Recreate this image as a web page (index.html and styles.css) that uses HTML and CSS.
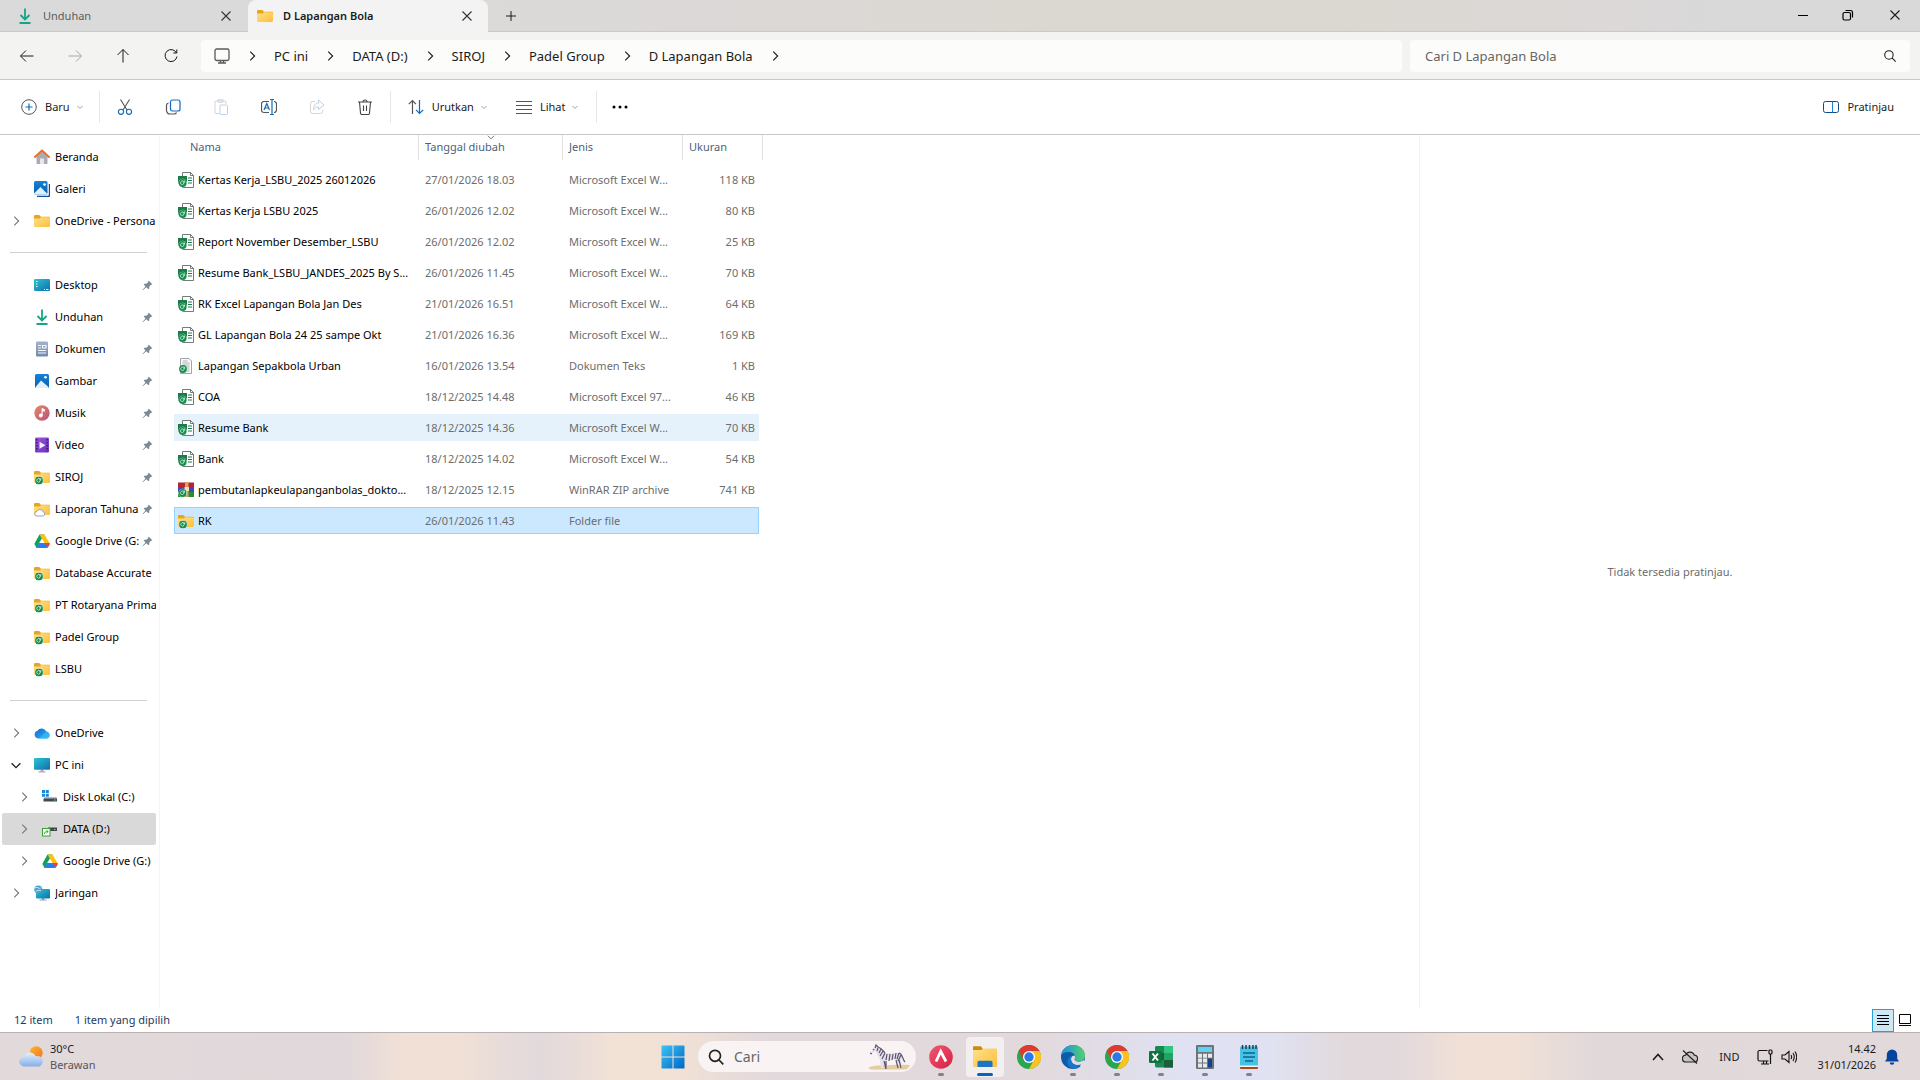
FILE: index.html
```html
<!DOCTYPE html>
<html lang="id">
    <head>
        <meta charset="utf-8">
        <title>D Lapangan Bola</title>
        <link rel="stylesheet" href="styles.css">
    </head>
    <body>
        <!--Icons-->
        <svg class="sprite" aria-hidden="true">
            <defs>
                <linearGradient id="gFolder" x1="0" y1="0" x2="1" y2="1"><stop offset="0" stop-color="#ffe08a"/><stop offset="1" stop-color="#fcbf3b"/></linearGradient>
                <linearGradient id="gTeal" x1="0" y1="0" x2="1" y2="1"><stop offset="0" stop-color="#2cc3d0"/><stop offset="1" stop-color="#0f6fae"/></linearGradient>
                <linearGradient id="gPic" x1="0" y1="0" x2="0" y2="1"><stop offset="0" stop-color="#1583d8"/><stop offset="1" stop-color="#0b5cad"/></linearGradient>
                <linearGradient id="gDoc" x1="0" y1="0" x2="0" y2="1"><stop offset="0" stop-color="#a3b3c9"/><stop offset="1" stop-color="#7389a8"/></linearGradient>
                <linearGradient id="gMusic" x1="0" y1="0" x2="1" y2="1"><stop offset="0" stop-color="#e58a62"/><stop offset="1" stop-color="#b9507f"/></linearGradient>
                <linearGradient id="gVideo" x1="0" y1="0" x2="1" y2="1"><stop offset="0" stop-color="#9c52dd"/><stop offset="1" stop-color="#6a35b8"/></linearGradient>
                <linearGradient id="gCloud" x1="0" y1="0" x2="1" y2="1"><stop offset="0" stop-color="#1668d6"/><stop offset="1" stop-color="#2cb4f5"/></linearGradient>
                <linearGradient id="gWin" x1="0" y1="0" x2="1" y2="1"><stop offset="0" stop-color="#3cc3f5"/><stop offset="1" stop-color="#0067c6"/></linearGradient>
                <linearGradient id="gWeather" x1="0" y1="0" x2="0" y2="1"><stop offset="0" stop-color="#e4effc"/><stop offset="1" stop-color="#86b0ea"/></linearGradient>
                <linearGradient id="gSun" x1="0" y1="0" x2="1" y2="1"><stop offset="0" stop-color="#ffb52e"/><stop offset="1" stop-color="#ef7421"/></linearGradient>
                <linearGradient id="gEdge" x1="0" y1="0" x2="1" y2="0"><stop offset="0" stop-color="#1d8fe0"/><stop offset="1" stop-color="#52d36b"/></linearGradient>
                <linearGradient id="gRed" x1="0" y1="0" x2="1" y2="1"><stop offset="0" stop-color="#f0596f"/><stop offset="1" stop-color="#d81f45"/></linearGradient>
            </defs>
            <symbol id="chev-right" viewBox="0 0 16 16"><path d="M6 3l5 5-5 5" fill="none" stroke="currentColor" stroke-width="1.3"/></symbol>
            <symbol id="chev-down" viewBox="0 0 16 16"><path d="M3 6l5 5 5-5" fill="none" stroke="currentColor" stroke-width="1.6"/></symbol>
            <symbol id="chev-up" viewBox="0 0 16 16"><path d="M3 11l5-5.500 5 5.500" fill="none" stroke="currentColor" stroke-width="1.6"/></symbol>
            <symbol id="close" viewBox="0 0 16 16"><path d="M3.500 3.500l9 9M12.500 3.500l-9 9" fill="none" stroke="currentColor" stroke-width="1.1"/></symbol>
            <symbol id="search" viewBox="0 0 16 16"><g fill="none" stroke="currentColor" stroke-width="1.200"><circle cx="6.800" cy="6.800" r="4.800"/><path d="M10.200 10.200l4.300 4.300"/></g></symbol>
            <symbol id="ok" viewBox="0 0 8 8"><circle cx="4" cy="4" r="3.900" fill="#178f50"/><path d="M2.200 5.200A2 2 0 0 1 5.500 2.800M5.800 1.600v1.600H4.200M2.500 4.800l1.200 1.200 2-2.500" fill="none" stroke="#d5f3e2" stroke-width=".8"/></symbol>
            <symbol id="folder" viewBox="0 0 16 16"><path d="M0 3.200c0-.7.500-1.200 1.200-1.200h4l1.800 1.800h7.800c.7 0 1.200.5 1.200 1.200V8H0z" fill="#e9a41c"/><path d="M0 5.500h5.500L7 4.200h7.800c.7 0 1.200.5 1.200 1.200v7.400c0 .7-.5 1.200-1.200 1.200H1.200C.5 14 0 13.500 0 12.800z" fill="url(#gFolder)"/></symbol>
            <symbol id="folder-ok" viewBox="0 0 16 16"><use href="#folder"/><circle cx="5" cy="11.500" r="4.300" fill="#e9f5ee"/><use href="#ok" x="1" y="7.500" width="8" height="8"/></symbol>
            <symbol id="folder-cloud" viewBox="0 0 16 16"><use href="#folder"/><path d="M3 15a2.300 2.300 0 0 1 0-4.600 3.200 3.200 0 0 1 6 .3A2.200 2.200 0 0 1 9 15z" fill="#fff" stroke="#8a9ac0" stroke-width=".9"/></symbol>
            <symbol id="home" viewBox="0 0 16 16"><path d="M2.500 7L8 2.500 13.500 7v7.200c0 .4-.3.800-.8.800H10v-5H6v5H3.300c-.5 0-.8-.4-.8-.8z" fill="#a9adb3"/><path d="M6 9.500h4V15H6z" fill="#e6e7e9"/><path d="M1 8l7-6.500L15 8" fill="none" stroke="#e8702a" stroke-width="2" stroke-linecap="round" stroke-linejoin="round"/></symbol>
            <symbol id="gallery" viewBox="0 0 16 16"><path d="M3 15.500h11c.9 0 1.500-.6 1.500-1.500V3" fill="none" stroke="#0d4f95" stroke-width="1.400"/><rect width="13.500" height="13.500" rx="1.500" fill="url(#gPic)"/><path d="M0 12.500L6.500 6l7 7c-.3.300-.7.500-1 .5h-11C.6 13.500 0 13.300 0 12.500z" fill="#dff1fc"/><circle cx="10.500" cy="3.500" r="1.300" fill="#fff"/></symbol>
            <symbol id="desktop" viewBox="0 0 16 16"><rect y="2" width="16" height="12" rx="1.300" fill="url(#gTeal)"/><path d="M2 4.500h1.500M2 7h1.500M2 9.500h1.500M10 12.500h1M12 12.500h2.500" stroke="#e8fbff" stroke-width="1.200"/></symbol>
            <symbol id="download" viewBox="0 0 16 16"><path d="M8 .5v11M3.500 7L8 11.500 12.500 7M2.500 15h11" fill="none" stroke="#16a589" stroke-width="1.800"/></symbol>
            <symbol id="document" viewBox="0 0 16 16"><rect x="2" y=".5" width="12" height="15" rx="1.200" fill="url(#gDoc)"/><path d="M4 4.500h3M4 7h3M8.500 4.500h3.500v2.500H8.500zM4 9.500h8M4 12h8" stroke="#f4f8fc" stroke-width="1.200" fill="none"/></symbol>
            <symbol id="picture" viewBox="0 0 16 16"><rect x="1" y="1" width="14" height="14" rx="1.500" fill="url(#gPic)"/><path d="M1.500 14L7 7.500l7.500 6.500c-.2.600-.6 1-1 1h-11c-.5 0-.9-.5-1-1z" fill="#dff1fc"/><circle cx="11.500" cy="4.300" r="1.300" fill="#fff"/></symbol>
            <symbol id="music" viewBox="0 0 16 16"><circle cx="8" cy="8" r="7.700" fill="url(#gMusic)"/><circle cx="6.800" cy="10.500" r="1.900" fill="#fff"/><path d="M8 10.500V3.500l2.500 1v1.800L8.700 5.600" fill="#fff" stroke="#fff" stroke-width=".9"/></symbol>
            <symbol id="video" viewBox="0 0 16 16"><rect x="1" y=".5" width="14" height="15" rx="1.200" fill="url(#gVideo)"/><path d="M2.800 2v12.500M13.200 2v12.500" stroke="#3a1975" stroke-width="1.500" stroke-dasharray="1.500 1.500"/><path d="M5.500 4.800l6 3.400-6 3.500z" fill="#f3e9fd"/></symbol>
            <symbol id="gdrive" viewBox="0 0 16 16"><path d="M5.500 1.500h5L5 11 2.500 15 .8 11.800c-.4-.8-.3-1.300 0-1.900z" fill="#14a05a"/><path d="M5.500 1.500h5l4.900 8.500h-5z" fill="#fbc013"/><path d="M5.200 10h5.200l-2.600-4.300z" fill="#fff"/><path d="M5.200 10h10.200c.3.600.2 1.200 0 1.700l-1.300 2.300c-.3.600-.8 1-1.600 1H3.500c-.6 0-1-.2-1.300-.6z" fill="#2b7de9"/><path d="M10.400 10h5c.3.600.2 1.200 0 1.700l-1.700 2.800z" fill="#e8443a"/></symbol>
            <symbol id="onedrive" viewBox="0 0 16 16"><path d="M4 13.500a4 4 0 0 1-.5-7.800 5 5 0 0 1 8.800.8 3.600 3.600 0 0 1 .5 7z" fill="url(#gCloud)"/><path d="M5 13.500L12 6.500c2 .2 4 1.700 4 3.700 0 2-1.500 3.300-3.200 3.300z" fill="#35bdf8" opacity=".7"/></symbol>
            <symbol id="pc" viewBox="0 0 16 16"><path d="M6.500 12.500h3v2h-3zM4.500 14.300h7v1.200h-7z" fill="#b5a3c9"/><rect y="1" width="16" height="11.800" rx="1" fill="url(#gTeal)"/></symbol>
            <symbol id="disk-c" viewBox="0 0 16 16"><path d="M0 1h3v3H0zM3.800 1h3v3h-3zM0 4.800h3v3H0zM3.800 4.800h3v3h-3z" fill="#1a86d9"/><path d="M2.500 8.200h12l.5 1.500H2z" fill="#a0a4a8"/><rect x="1.500" y="9.500" width="13.500" height="3" fill="#43484c"/><path d="M12 11h1.500" stroke="#61e06b"/></symbol>
            <symbol id="disk-d" viewBox="0 0 16 16"><path d="M6 6.500h9v3.500H8.500z" fill="#43484c"/><path d="M6 6h9v1H6z" fill="#8b8f93"/><path d="M12 8.500h1.500" stroke="#61e06b"/><rect x=".5" y="7.500" width="7.500" height="7.500" fill="#fff" stroke="#35a42f"/><path d="M2.500 13c0-2 1-2.500 3.500-2.500M4.500 9.200L6.200 10.600 4.500 12" fill="none" stroke="#35a42f"/></symbol>
            <symbol id="network" viewBox="0 0 16 16"><path d="M8 13h2v2H8zM5.500 14.500h7v1h-7z" fill="#8c9bb8"/><rect x="2" y="4" width="14" height="9.500" rx="1" fill="url(#gTeal)"/><circle cx="4.300" cy="4.500" r="4" fill="#4aa0d0"/><path d="M1 3c3-2 4 2 6-.5M2 7c1-3 3-1 5-1.500" stroke="#d8f0e8" fill="none"/></symbol>
            <symbol id="pin" viewBox="0 0 12 12"><path d="M7.500.8l3.800 3.700-.9.800-.6-.2-1.900 2v2.200l-.9.900-2.300-2.300L1 11.300l-.5-.5 3.300-3.700L1.800 5l.8-.8h2.200l2-2-.2-.6z" fill="#7d8a94"/></symbol>
            <symbol id="xls" viewBox="0 0 16 16"><path d="M4.500.5h8l3 3v12h-11z" fill="#fff" stroke="#4e5d57" stroke-width=".8"/><path d="M12.500.5v3h3" fill="none" stroke="#4e5d57" stroke-width=".8"/><path d="M10 6h4M10 8.500h4M10 11h4" stroke="#1c7c47" stroke-width="1.200"/><rect y="4" width="9" height="8" fill="#1c7c47"/><circle cx="4.700" cy="11" r="4.300" fill="#d3eedf"/><use href="#ok" x=".7" y="7" width="8" height="8"/></symbol>
            <symbol id="txt" viewBox="0 0 16 16"><path d="M2.500.5h8.500l2.500 2.500v12.500h-11z" fill="#fafafa" stroke="#8c8f90" stroke-width=".8"/><path d="M4.500 3h5M4.500 5h7M4.500 7h7M8 9h3.500M9 11h2.500M9 13h2.500" stroke="#9c9fa1" stroke-width=".8"/><use href="#ok" x="1" y="7" width="8" height="8"/></symbol>
            <symbol id="rar" viewBox="0 0 16 16"><rect width="16" height="5.500" y=".5" fill="#b32438"/><rect width="16" height="4.500" y="5.500" fill="#3b4bb0"/><rect width="16" height="5" y="10" fill="#2d8a45"/><path d="M7 .5h3.500v14.500H7z" fill="#e0a24b"/><path d="M6.500 5h4.500v4H6.500z" fill="#f3e2b4"/><circle cx="4.700" cy="11" r="4.300" fill="#e9f5ee"/><use href="#ok" x=".7" y="7" width="8" height="8"/></symbol>
            <symbol id="chrome" viewBox="0 0 24 24"><circle cx="12" cy="12" r="12" fill="#2da44e"/><path d="M1.600 6A12 12 0 0 1 22.400 6L12 6.600 7 14.800z" fill="#dd3b2f"/><path d="M22.400 6A12 12 0 0 1 12 24l5-9 .2-6L12 6z" fill="#fcc31e"/><circle cx="12" cy="12" r="6" fill="#fff"/><circle cx="12" cy="12" r="4.700" fill="#2b78e8"/></symbol>
        </svg>

        <!--Title bar with tabs-->
        <header class="titlebar">
            <div class="tab">
                <svg class="icon"><use href="#download"/></svg>
                <span class="tab-name">Unduhan</span>
                <button class="plain" aria-label="Tutup tab"><svg class="icon"><use href="#close"/></svg></button>
            </div>
            <div class="tab active">
                <svg class="icon"><use href="#folder"/></svg>
                <span class="tab-name">D Lapangan Bola</span>
                <button class="plain" aria-label="Tutup tab"><svg class="icon"><use href="#close"/></svg></button>
            </div>
            <button class="plain new-tab" aria-label="Tab baru"><svg class="icon" viewBox="0 0 16 16"><path d="M8 3v10M3 8h10" stroke="currentColor"/></svg></button>
            <div class="window-buttons">
                <button class="plain" aria-label="Minimalkan"><svg class="icon" viewBox="0 0 16 16"><path d="M3 8.500h10" stroke="#000"/></svg></button>
                <button class="plain" aria-label="Pulihkan"><svg class="icon" viewBox="0 0 16 16"><g fill="none" stroke="#000" stroke-width="1.200"><rect x="3" y="5.500" width="7.500" height="7.500" rx="1.500"/><path d="M5.500 3.500h5a2 2 0 0 1 2 2v5"/></g></svg></button>
                <button class="plain" aria-label="Tutup"><svg class="icon"><use href="#close"/></svg></button>
            </div>
        </header>

        <!--Address bar-->
        <nav class="addressbar">
            <button class="plain nav-button" aria-label="Kembali"><svg class="icon" viewBox="0 0 16 16"><path d="M14.500 8h-13M7 2.500L1.500 8 7 13.500" fill="none" stroke="currentColor"/></svg></button>
            <button class="plain nav-button off" aria-label="Maju"><svg class="icon" viewBox="0 0 16 16"><path d="M1.500 8h13M9 2.500L14.500 8 9 13.500" fill="none" stroke="currentColor"/></svg></button>
            <button class="plain nav-button" aria-label="Naik"><svg class="icon" viewBox="0 0 16 16"><path d="M8 14.500v-13M2.500 7L8 1.500 13.500 7" fill="none" stroke="currentColor"/></svg></button>
            <button class="plain nav-button" aria-label="Refresh"><svg class="icon" viewBox="0 0 16 16"><path d="M13.500 5A6 6 0 1 0 14 8.500M13.800 1.500V5h-3.500" fill="none" stroke="currentColor"/></svg></button>
            <div class="path">
                <svg class="icon" viewBox="0 0 16 16"><g fill="none" stroke="#5a5a5a" stroke-width="1.300"><rect x="1" y="1" width="14" height="11.500" rx="1.800"/><path d="M4 15h8M6.500 12.500v2M9.500 12.500v2"/></g></svg>
                <svg class="sep-icon"><use href="#chev-right"/></svg>
                <a href="#">PC ini</a>
                <svg class="sep-icon"><use href="#chev-right"/></svg>
                <a href="#">DATA (D:)</a>
                <svg class="sep-icon"><use href="#chev-right"/></svg>
                <a href="#">SIROJ</a>
                <svg class="sep-icon"><use href="#chev-right"/></svg>
                <a href="#">Padel Group</a>
                <svg class="sep-icon"><use href="#chev-right"/></svg>
                <a href="#">D Lapangan Bola</a>
                <svg class="sep-icon"><use href="#chev-right"/></svg>
            </div>
            <div class="find">
                <input type="text" aria-label="Cari" placeholder="Cari D Lapangan Bola">
                <svg class="find-icon"><use href="#search"/></svg>
            </div>
        </nav>

        <!--Toolbar-->
        <div class="toolbar">
            <button class="plain tool new"><svg class="icon" viewBox="0 0 16 16"><circle cx="8" cy="8" r="7.300" fill="none" stroke="#555"/><path d="M8 4.500v7M4.500 8h7" stroke="#0f6cbd" stroke-width="1.200"/></svg>Baru<svg class="caret"><use href="#chev-down"/></svg></button>
            <div class="tool-group">
                <button class="plain tool" aria-label="Potong"><svg class="icon" viewBox="0 0 16 16"><g fill="none" stroke-width="1.100"><path d="M3.500.5l6.500 10.500M12.500.5L6 11" stroke="#555"/><g stroke="#0f6cbd"><circle cx="4" cy="12.800" r="2.600"/><circle cx="12" cy="12.800" r="2.600"/></g></g></svg></button>
                <button class="plain tool" aria-label="Salin"><svg class="icon" viewBox="0 0 16 16"><g fill="none" stroke-width="1.200"><rect x="5.500" y="1" width="9.500" height="11" rx="2" stroke="#0f6cbd"/><path d="M3.500 4C2 4.300 1.500 5 1.500 6.500v5A3.500 3.500 0 0 0 5 15h4c1.500 0 2.200-.5 2.500-1.500" stroke="#555"/></g></svg></button>
                <button class="plain tool" aria-label="Tempel" disabled><svg class="icon" viewBox="0 0 16 16"><g fill="none"><path d="M6.500 14.500H3a1 1 0 0 1-1-1V3a1 1 0 0 1 1-1h9a1 1 0 0 1 1 1v2M5 .7h5v2.500H5z" stroke="#c9c9c9"/><rect x="7" y="6" width="7.500" height="9.500" rx="1" stroke="#a9c9e6"/></g></svg></button>
                <button class="plain tool" aria-label="Ganti nama"><svg class="icon" viewBox="0 0 16 16"><g fill="none" stroke="#0f6cbd" stroke-width="1.200"><path d="M8 2.500H3a2.500 2.500 0 0 0-2.500 2.500v6A2.500 2.500 0 0 0 3 13.500h5M13 2.500a2.500 2.500 0 0 1 2.500 2.500v6a2.500 2.500 0 0 1-2.500 2.500" stroke="#555"/><path d="M3 11l2.800-6.500L8.500 11M4 9h3.700M11 .5v15M9 .5h4M9 15.500h4"/></g></svg></button>
                <button class="plain tool" aria-label="Bagikan" disabled><svg class="icon" viewBox="0 0 16 16"><g fill="none"><path d="M6 2.500H3.500a2 2 0 0 0-2 2v8a2 2 0 0 0 2 2h8a2 2 0 0 0 2-2V11" stroke="#c9c9c9"/><path d="M9.500 1l5.500 5-5.500 4.500V8C7 8 5.500 9 4.500 11 4.500 7 6.500 4 9.500 4z" stroke="#a9c9e6"/></g></svg></button>
                <button class="plain tool" aria-label="Hapus"><svg class="icon" viewBox="0 0 16 16"><path d="M1 3h14M6 3a2 2 0 0 1 4 0M2.500 3l1 11a1.500 1.500 0 0 0 1.500 1.500h6a1.500 1.500 0 0 0 1.500-1.500l1-11M6.500 6.500v5.500M9.500 6.500v5.500" fill="none" stroke="#444" stroke-width="1.100"/></svg></button>
            </div>
            <div class="tool-group">
                <button class="plain tool"><svg class="icon" viewBox="0 0 16 16"><g fill="none" stroke-width="1.200"><path d="M4.500 15V1.500M.8 5.200l3.700-3.700 3.500 3.700" stroke="#555"/><path d="M11.500 1v13.500M8 10.800l3.500 3.700 3.700-3.700" stroke="#0f6cbd"/></g></svg>Urutkan<svg class="caret"><use href="#chev-down"/></svg></button>
                <button class="plain tool"><svg class="icon" viewBox="0 0 16 16"><path d="M0 2.500h16M0 6.500h16M0 10.500h16M0 14.500h16" stroke="#555"/></svg>Lihat<svg class="caret"><use href="#chev-down"/></svg></button>
            </div>
            <button class="plain tool more" aria-label="Lainnya"><svg class="icon" viewBox="0 0 16 16"><circle cx="2" cy="8" r="1.500"/><circle cx="8" cy="8" r="1.500"/><circle cx="14" cy="8" r="1.500"/></svg></button>
            <button class="plain tool preview-toggle"><svg class="icon" viewBox="0 0 16 16"><g fill="none"><rect x=".5" y="2.500" width="15" height="11" rx="2" stroke="#0f4a80"/><path d="M9.500 2.500v11" stroke="#1583d8"/></g></svg>Pratinjau</button>
        </div>

        <main class="content">
            <!--Navigation pane-->
            <aside class="sidebar">
                <ul>
                    <li><svg class="icon"><use href="#home"/></svg><span>Beranda</span></li>
                    <li><svg class="icon"><use href="#gallery"/></svg><span>Galeri</span></li>
                    <li class="closed"><svg class="arrow"><use href="#chev-right"/></svg><svg class="icon"><use href="#folder"/></svg><span>OneDrive - Persona</span></li>
                </ul>
                <hr>
                <ul>
                    <li><svg class="icon"><use href="#desktop"/></svg><span>Desktop</span><svg class="pin"><use href="#pin"/></svg></li>
                    <li><svg class="icon"><use href="#download"/></svg><span>Unduhan</span><svg class="pin"><use href="#pin"/></svg></li>
                    <li><svg class="icon"><use href="#document"/></svg><span>Dokumen</span><svg class="pin"><use href="#pin"/></svg></li>
                    <li><svg class="icon"><use href="#picture"/></svg><span>Gambar</span><svg class="pin"><use href="#pin"/></svg></li>
                    <li><svg class="icon"><use href="#music"/></svg><span>Musik</span><svg class="pin"><use href="#pin"/></svg></li>
                    <li><svg class="icon"><use href="#video"/></svg><span>Video</span><svg class="pin"><use href="#pin"/></svg></li>
                    <li><svg class="icon"><use href="#folder-ok"/></svg><span>SIROJ</span><svg class="pin"><use href="#pin"/></svg></li>
                    <li><svg class="icon"><use href="#folder-cloud"/></svg><span>Laporan Tahuna</span><svg class="pin"><use href="#pin"/></svg></li>
                    <li><svg class="icon"><use href="#gdrive"/></svg><span>Google Drive (G:</span><svg class="pin"><use href="#pin"/></svg></li>
                    <li><svg class="icon"><use href="#folder-ok"/></svg><span>Database Accurate</span></li>
                    <li><svg class="icon"><use href="#folder-ok"/></svg><span>PT Rotaryana Prima</span></li>
                    <li><svg class="icon"><use href="#folder-ok"/></svg><span>Padel Group</span></li>
                    <li><svg class="icon"><use href="#folder-ok"/></svg><span>LSBU</span></li>
                </ul>
                <hr>
                <ul>
                    <li class="closed"><svg class="arrow"><use href="#chev-right"/></svg><svg class="icon"><use href="#onedrive"/></svg><span>OneDrive</span></li>
                    <li class="open"><svg class="arrow"><use href="#chev-down"/></svg><svg class="icon"><use href="#pc"/></svg><span>PC ini</span></li>
                    <li class="closed child"><svg class="arrow"><use href="#chev-right"/></svg><svg class="icon"><use href="#disk-c"/></svg><span>Disk Lokal (C:)</span></li>
                    <li class="closed child current"><svg class="arrow"><use href="#chev-right"/></svg><svg class="icon"><use href="#disk-d"/></svg><span>DATA (D:)</span></li>
                    <li class="closed child"><svg class="arrow"><use href="#chev-right"/></svg><svg class="icon"><use href="#gdrive"/></svg><span>Google Drive (G:)</span></li>
                    <li class="closed"><svg class="arrow"><use href="#chev-right"/></svg><svg class="icon"><use href="#network"/></svg><span>Jaringan</span></li>
                </ul>
            </aside>

            <!--File list-->
            <section class="files">
                <table>
                    <thead>
                        <tr>
                            <th class="name">Nama</th>
                            <th class="date">Tanggal diubah<svg class="sort"><use href="#chev-down"/></svg></th>
                            <th class="type">Jenis</th>
                            <th class="size">Ukuran</th>
                        </tr>
                    </thead>
                    <tbody>
                        <tr><td><svg class="icon"><use href="#xls"/></svg>Kertas Kerja_LSBU_2025 26012026</td><td>27/01/2026 18.03</td><td>Microsoft Excel W...</td><td>118 KB</td></tr>
                        <tr><td><svg class="icon"><use href="#xls"/></svg>Kertas Kerja LSBU 2025</td><td>26/01/2026 12.02</td><td>Microsoft Excel W...</td><td>80 KB</td></tr>
                        <tr><td><svg class="icon"><use href="#xls"/></svg>Report November Desember_LSBU</td><td>26/01/2026 12.02</td><td>Microsoft Excel W...</td><td>25 KB</td></tr>
                        <tr><td><svg class="icon"><use href="#xls"/></svg>Resume Bank_LSBU_JANDES_2025 By S...</td><td>26/01/2026 11.45</td><td>Microsoft Excel W...</td><td>70 KB</td></tr>
                        <tr><td><svg class="icon"><use href="#xls"/></svg>RK Excel Lapangan Bola Jan Des</td><td>21/01/2026 16.51</td><td>Microsoft Excel W...</td><td>64 KB</td></tr>
                        <tr><td><svg class="icon"><use href="#xls"/></svg>GL Lapangan Bola 24 25 sampe Okt</td><td>21/01/2026 16.36</td><td>Microsoft Excel W...</td><td>169 KB</td></tr>
                        <tr><td><svg class="icon"><use href="#txt"/></svg>Lapangan Sepakbola Urban</td><td>16/01/2026 13.54</td><td>Dokumen Teks</td><td>1 KB</td></tr>
                        <tr><td><svg class="icon"><use href="#xls"/></svg>COA</td><td>18/12/2025 14.48</td><td>Microsoft Excel 97...</td><td>46 KB</td></tr>
                        <tr class="hovered"><td><svg class="icon"><use href="#xls"/></svg>Resume Bank</td><td>18/12/2025 14.36</td><td>Microsoft Excel W...</td><td>70 KB</td></tr>
                        <tr><td><svg class="icon"><use href="#xls"/></svg>Bank</td><td>18/12/2025 14.02</td><td>Microsoft Excel W...</td><td>54 KB</td></tr>
                        <tr><td><svg class="icon"><use href="#rar"/></svg>pembutanlapkeulapanganbolas_dokto...</td><td>18/12/2025 12.15</td><td>WinRAR ZIP archive</td><td>741 KB</td></tr>
                        <tr class="selected"><td><svg class="icon"><use href="#folder-ok"/></svg>RK</td><td>26/01/2026 11.43</td><td>Folder file</td><td></td></tr>
                    </tbody>
                </table>
            </section>

            <section class="preview">Tidak tersedia pratinjau.</section>
        </main>

        <footer class="status">
            <span>12 item</span>
            <span>1 item yang dipilih</span>
            <div class="views">
                <button class="plain view on" aria-label="Detail"><svg class="icon" viewBox="0 0 16 16"><path d="M2 3.500h12M2 6.500h12M2 9.500h12M2 12.500h12" stroke="#000"/></svg></button>
                <button class="plain view" aria-label="Ikon besar"><svg class="icon" viewBox="0 0 16 16"><path d="M2.500 2.500h11v9h-11zM2 13.500h12" fill="none" stroke="#000"/></svg></button>
            </div>
        </footer>

        <!--Taskbar-->
        <div class="taskbar">
            <div class="weather">
                <svg class="weather-icon" viewBox="0 0 24 24"><circle cx="16.500" cy="8.500" r="6.300" fill="url(#gSun)"/><path d="M5 21.500a4.600 4.600 0 0 1-.3-9.200 6 6 0 0 1 11.200-.5A5 5 0 0 1 19.500 21.500z" fill="url(#gWeather)"/></svg>
                <div>30°C<br><span>Berawan</span></div>
            </div>
            <div class="apps">
                <button class="plain app start" aria-label="Mulai"><svg class="app-icon" viewBox="0 0 24 24"><path d="M1 .5h10.500v11H.5V1zM12.500.5H23l.5.5v10.500h-11zM.5 12.500h11v11H1l-.5-.5zM12.500 12.500h11V23l-.5.500H12.500z" fill="url(#gWin)"/></svg></button>
                <div class="task-search">
                    <svg class="icon" viewBox="0 0 16 16"><g fill="none" stroke="#222" stroke-width="1.700"><circle cx="7" cy="6.800" r="5.500"/><path d="M11 11l4.300 4.300"/></g></svg>
                    <input type="text" aria-label="Cari di taskbar" placeholder="Cari">
                    <svg class="zebra" viewBox="0 0 44 26">
                        <path d="M0 24c6-3 14-2.500 22-3 8-.4 14-.5 20 0-1 2-2.500 3.500-4 4.500H3z" fill="#e5cba0"/>
                        <path d="M2 9l5-5 1-3 2 2c3 .5 5 4 7 6 5 1 10-1 14 0 2 1 3 3 3 5l-1 3 1 7h-2l-2-7-3-2c-3 1-6 1-8 1v8h-2l-1-8-1 8h-2l-1-9c-2-2-3-5-4-8l-4 2-2 .5z" fill="#e4dfea"/>
                        <path d="M7 4l1-3 2 2c4 1 6 5 7 6M2 9l2 1M10 4l-1 3M13 5l-2 4M15 7l-3 5M17 9l-3 6M19 10l-1 6M22 10l-1 7M25 10l-1 6M28 9l-1 6M31 9l-2 6M33 11l-3 6M31 9c4 1 3 6 6 9M16 17l2 8M18 17v8M31 16l2 8M28 16l2 8M5 5l1 1" fill="none" stroke="#5a5570" stroke-width="1.200"/>
                    </svg>
                </div>
                <button class="plain app running" aria-label="Accurate"><svg class="app-icon" viewBox="0 0 24 24"><circle cx="12" cy="12" r="11.800" fill="url(#gRed)"/><path d="M7 16.500l4.700-10 5.300 10" fill="none" stroke="#fff" stroke-width="2.800"/></svg></button>
                <button class="plain app focused" aria-label="File Explorer"><svg class="app-icon" viewBox="0 0 24 24"><path d="M0 2.500c0-.8.500-1.200 1.200-1.200h6.600L10 4v5H0z" fill="#c98d0c"/><path d="M0 5h8.500L10 3.500h12.800c.7 0 1.200.5 1.200 1.200v16.100c0 .7-.5 1.200-1.200 1.200H1.200C.5 22 0 21.500 0 20.800z" fill="url(#gFolder)"/><path d="M4.500 22v-4.500c0-1 .7-1.700 1.700-1.700h11.600c1 0 1.700.7 1.700 1.700V22z" fill="#1b74c5"/></svg></button>
                <button class="plain app" aria-label="Chrome"><svg class="app-icon"><use href="#chrome"/></svg></button>
                <button class="plain app running" aria-label="Edge"><svg class="app-icon" viewBox="0 0 24 24"><circle cx="12" cy="12" r="12" fill="#0e5ba8"/><path d="M.2 10C1.500 4 6 0 12 0c7 0 12 5 12 10.500 0 4-3 6-6.500 6-2.500 0-4-1-4-2 0-.8.800-1.200.8-2.500C14.300 9 11 7 7.500 7 3.500 7 1 8.500.2 10z" fill="url(#gEdge)"/><path d="M14.300 12c0 1-.8 1.500-.8 2.500 0 1.200 1.800 2.300 4 2.300 2 0 4-.6 5.300-1.800L24 18l-3.500 3.500c-1.500-1-3-1.500-5-1.500-3.500-.5-5.500-3-5.500-6 0-2 1.500-3.500 3.300-3.500z" fill="#e2dce6"/><path d="M10 14c0 3 2 5.500 5.500 6 2 .2 3.500-.2 4.700-1a12 12 0 0 1-8.200 5c-3-1-5.500-4-5.500-7.500 0-3 2-5.500 5-6-.9.900-1.500 2-1.500 3.500z" fill="#1876cc"/></svg></button>
                <button class="plain app running" aria-label="Chrome"><svg class="app-icon"><use href="#chrome"/></svg></button>
                <button class="plain app running" aria-label="Excel"><svg class="app-icon" viewBox="0 0 24 24"><path d="M6 2.500C6 1.700 6.700 1 7.500 1H24v21.500H7.500c-.8 0-1.500-.7-1.500-1.500z" fill="#1a8a50"/><path d="M15 1h9v7h-9z" fill="#33c481"/><path d="M6 8h9v7H6zM15 15h9v7.500h-9z" fill="#17603a"/><path d="M15 8h9v7h-9z" fill="#21a366"/><rect y="6" width="12.500" height="12" rx="1.200" fill="#0f7240"/><path d="M3.500 8.500l5.500 7M9 8.500l-5.500 7" stroke="#fff" stroke-width="1.900"/></svg></button>
                <button class="plain app running" aria-label="Kalkulator"><svg class="app-icon" viewBox="0 0 24 24"><rect x="3" width="18" height="24" rx="1.200" fill="#6d7379"/><rect x="5" y="2" width="14" height="5" fill="#5fd3f3"/><path d="M5 8.800h4v4H5zM10 8.800h4v4h-4zM15 8.800h4v4h-4zM5 13.600h4v4H5zM10 13.600h4v4h-4zM5 18.400h4v4H5zM10 18.400h4v4h-4z" fill="#e6e8ea"/><path d="M15 13.600h4v8.800h-4z" fill="#16418c"/></svg></button>
                <button class="plain app running" aria-label="Notepad"><svg class="app-icon" viewBox="0 0 24 24"><rect x="3" y="21" width="18" height="3" rx="1" fill="#a8481f"/><rect x="3" y="1.500" width="18" height="20.500" rx="1.200" fill="#46c3e2"/><path d="M3 20.500h18v1.500H3z" fill="#eef4f6"/><path d="M5.500 0v4M9 0v4M12.500 0v4M16 0v4M19 0v4" stroke="#1d3c58" stroke-width="1.500"/><path d="M6 8h12M6 12h12M8 16h8" stroke="#0c6397" stroke-width="1.600"/></svg></button>
            </div>
            <div class="tray">
                <svg class="icon overflow"><use href="#chev-up"/></svg>
                <svg class="icon" viewBox="0 0 16 16"><g fill="none" stroke="#222" stroke-width="1.200"><path d="M4 13a3.400 3.400 0 0 1-.3-6.800 4.500 4.500 0 0 1 8.600 0A3.400 3.400 0 0 1 12 13z" fill="#c9c3c5"/><path d="M1 1.500l14 13"/></g></svg>
                <span class="lang">IND</span>
                <svg class="icon" viewBox="0 0 16 16"><g fill="none" stroke="#111" stroke-width="1.200"><path d="M10.500 1.500h-8a1.500 1.500 0 0 0-1.500 1.500v7.500A1.500 1.500 0 0 0 2.500 12h9M4 15h8M6.500 12v3M9.500 12v3"/><rect x="12" y="1" width="3" height="4" rx="1"/><path d="M13.500 5v10"/></g></svg>
                <svg class="icon" viewBox="0 0 16 16"><g fill="none" stroke="#111" stroke-width="1.100"><path d="M1 6h3l4-3.500v11L4 10H1z"/><path d="M10 6q1.300 2 0 4M12 4q2.500 4 0 8M14 2.500q3.500 5.500 0 11"/></g></svg>
                <div class="clock">14.42<br>31/01/2026</div>
                <svg class="icon" viewBox="0 0 16 16"><path d="M8 .5a5.200 5.200 0 0 1 5.200 5.200v4L15 12.500H1l1.800-2.800v-4A5.200 5.200 0 0 1 8 .5zM5.700 13.500h4.600a2.300 2.300 0 0 1-4.600 0z" fill="#06439a"/></svg>
            </div>
        </div>
    </body>
</html>
```
FILE: styles.css
```css
* {
    box-sizing: border-box;
}
body {
    margin: 0px;
    height: 100vh;
    display: flex;
    flex-direction: column;
    overflow: hidden;
    background-color: white;
    color: #1b1b1b;
    font-family: "Segoe UI", "Noto Sans", "Open Sans", sans-serif;
    font-size: 11px;
    line-height: 16px;
}
.sprite {
    position: absolute;
    width: 0px;
    height: 0px;
}
.plain {
    display: flex;
    align-items: center;
    justify-content: center;
    padding: 0px;
    border: none;
    background: none;
    color: inherit;
    font: inherit;
}
.icon {
    flex: none;
    width: 16px;
    height: 16px;
}
input {
    border: none;
    outline: none;
    background: none;
    font: inherit;
    min-width: 0px;
    flex: 1;
    padding: 0px;
}
input::placeholder {
    color: #666;
    opacity: 1;
}

/* title bar */
.titlebar {
    flex: none;
    height: 32px;
    display: flex;
    background: linear-gradient(to right, #dadada 10%, #dcd8d8 35%, #dbd8d2 55%, #dbd8d2 70%, #dcd8d7 82%, #d9d9d9 90%);
    border-bottom: 1px solid #cbc9c8;
}
.tab {
    width: 248px;
    padding: 0px 14px 0px 17px;
    display: flex;
    align-items: center;
    gap: 10px;
    color: #5c5c5c;
}
.tab-name {
    flex: 1;
}
.tab .plain {
    color: #333;
}
.tab.active {
    width: 240px;
    margin-bottom: -1px;
    padding: 0px 13px 0px 9px;
    border-radius: 8px 8px 0px 0px;
    background-color: #f3f3f3;
    color: #1b1b1b;
    font-weight: 600;
}
.new-tab {
    width: 46px;
}
.window-buttons {
    display: flex;
    margin-left: auto;
}
.window-buttons .plain {
    width: 45px;
    height: 29px;
}
.window-buttons .plain:last-child {
    width: 50px;
}

/* address bar */
.addressbar {
    flex: none;
    height: 48px;
    display: flex;
    align-items: center;
    padding: 0px 10px 0px 3px;
    background-color: #f3f3f2;
    border-bottom: 1px solid #c8c8c8;
    font-size: 13px;
}
.nav-button {
    width: 48px;
    height: 32px;
}
.nav-button.off {
    color: #a8a8a8;
}
.path {
    flex: 1;
    height: 32px;
    margin: 0px 8px 0px 6px;
    padding: 0px 13px;
    display: flex;
    align-items: center;
    border-radius: 4px;
    background-color: #fcfcfa;
}
.path a {
    color: #1b1b1b;
    text-decoration: none;
}
.sep-icon {
    width: 14px;
    height: 14px;
    margin: 0px 15px;
}
.find {
    width: 500px;
    height: 32px;
    display: flex;
    align-items: center;
    padding: 0px 13px 0px 15px;
    border-radius: 4px;
    background-color: #fcfcfa;
}
.find-icon {
    width: 14px;
    height: 14px;
}

/* toolbar */
.toolbar {
    flex: none;
    height: 55px;
    display: flex;
    align-items: center;
    padding: 0px 26px 0px 21px;
    border-bottom: 1px solid #c8c8c8;
}
.tool {
    gap: 8px;
    height: 32px;
}
.tool:disabled {
    opacity: 0.8;
}
.caret {
    width: 8px;
    height: 8px;
    color: #888;
    margin-left: -2px;
}
.new {
    padding-right: 15px;
}
.tool-group {
    display: flex;
    gap: 32px;
    padding: 0px 17px;
    height: 32px;
    align-items: center;
    border-left: 1px solid #e6e6e6;
    border-right: 1px solid #e6e6e6;
}
.tool-group + .tool-group {
    border-left: none;
    gap: 28px;
}
.more {
    padding-left: 15px;
}
.preview-toggle {
    margin-left: auto;
}

/* content */
.content {
    flex: 1;
    min-height: 0px;
    display: flex;
}
.sidebar {
    flex: none;
    width: 160px;
    padding: 6px 3px 0px 2px;
    border-right: 1px solid #f5f5f5;
    color: #000;
}
.sidebar ul {
    margin: 0px;
    padding: 0px;
    list-style: none;
}
.sidebar li {
    height: 32px;
    padding-left: 32px;
    display: flex;
    align-items: center;
    gap: 5px;
    border-radius: 2px;
    overflow: hidden;
    white-space: nowrap;
}
.sidebar li span {
    flex: 1;
    min-width: 0px;
    overflow: hidden;
}
.sidebar li.closed, .sidebar li.open {
    padding-left: 7px;
}
.sidebar li.child {
    padding-left: 15px;
}
.sidebar li.current {
    background-color: #d9d9d9;
}
.arrow {
    flex: none;
    width: 14px;
    height: 14px;
    margin-right: 6px;
    color: #777;
}
.open .arrow {
    color: #222;
}
.pin {
    flex: none;
    width: 11px;
    height: 11px;
    margin-right: 3px;
    margin-left: -5px;
}
.sidebar hr {
    height: 1px;
    margin: 15px 9px 16px 8px;
    border: none;
    background-color: #d0d0d0;
}
.files {
    flex: 1;
    padding-left: 14px;
}
.files table {
    width: 589px;
    table-layout: fixed;
    border-spacing: 0px;
}
.files th {
    position: relative;
    height: 25px;
    padding: 0px 0px 1px 6px;
    border-right: 1px solid #e2e2e2;
    color: #4c5f7c;
    font-weight: normal;
    text-align: left;
}
.files th.name {
    width: 245px;
    padding-left: 16px;
}
.files th.date {
    width: 144px;
}
.files th.type {
    width: 120px;
}
.sort {
    position: absolute;
    top: -3px;
    left: 67px;
    width: 10px;
    height: 10px;
    color: #777;
}
.files tbody::before {
    content: "";
    display: block;
    height: 6px;
}
/* 27px row and a 4px gap under it */
.files td {
    height: 31px;
    padding: 0px 0px 0px 6px;
    border: 0px solid transparent;
    border-bottom-width: 4px;
    background-clip: padding-box;
    color: #6d6d6d;
    white-space: nowrap;
    overflow: hidden;
}
.files td:first-child {
    padding-left: 4px;
    color: #000;
}
.files td:last-child {
    padding-right: 4px;
    border-right-width: 4px;
    text-align: right;
}
.files td .icon {
    margin-right: 4px;
    vertical-align: -4px;
}
.hovered td {
    background-color: #e5f2fc;
}
.selected td {
    background-color: #cce8ff;
    box-shadow: inset 0px 1px #99d1ff, inset 0px -1px #99d1ff;
}
.selected td:first-child {
    box-shadow: inset 1px 1px #99d1ff, inset 0px -1px #99d1ff;
}
.selected td:last-child {
    box-shadow: inset -1px 1px #99d1ff, inset 0px -1px #99d1ff;
}
.preview {
    flex: none;
    width: 501px;
    display: flex;
    align-items: center;
    justify-content: center;
    border-left: 1px solid #f3f3f3;
    color: #6d6d6d;
}

/* status bar */
.status {
    flex: none;
    height: 24px;
    display: flex;
    align-items: center;
    gap: 22px;
    padding-left: 14px;
    color: #1e395b;
}
.views {
    display: flex;
    margin-left: auto;
    padding-right: 4px;
}
.view {
    width: 22px;
    height: 23px;
}
.view.on {
    border: 1px solid #26a0da;
    background-color: #cfe8f6;
}

/* taskbar */
.taskbar {
    flex: none;
    height: 48px;
    display: grid;
    grid-template-columns: 1fr auto 1fr;
    align-items: center;
    border-top: 1px solid #b9b0b2;
    background: linear-gradient(to right, #e2d9db 0%, #e0d8da 18%, #f1e0d6 21%, #f0e0d6 24%, #e1d9dc 28%, #f2e1d5 32%, #f2e1d5 35%, #e2d9dc 40%, #e2d9dd 54%, #e0e2f3 62%, #e0e2f3 66%, #e1d9dc 70%, #e2d9db 73%, #f1e0d6 76%, #f0e0d6 79%, #e1d8da 83%, #e2d9db 100%);
}
.weather {
    display: flex;
    align-items: center;
    gap: 6px;
    padding-left: 19px;
}
.weather span {
    color: #5b5356;
}
.weather-icon {
    width: 25px;
    height: 25px;
}
.apps {
    display: flex;
    align-items: center;
    gap: 6px;
    padding-left: 2px;
}
.app {
    position: relative;
    width: 38px;
    height: 40px;
}
.app-icon {
    width: 24px;
    height: 24px;
}
.focused {
    border-radius: 4px;
    background-color: #f3eef0;
}
/* indicator line below a running app */
.running::after, .focused::after {
    content: "";
    position: absolute;
    bottom: 1px;
    left: 16px;
    width: 6px;
    height: 3px;
    border-radius: 2px;
    background-color: #858083;
}
.focused::after {
    left: 11px;
    width: 16px;
    background-color: #0067c0;
}
.task-search {
    width: 218px;
    height: 31px;
    display: flex;
    align-items: center;
    gap: 10px;
    padding: 0px 4px 0px 10px;
    border-radius: 16px;
    background-color: #f9f3f3;
    font-size: 14px;
}
.zebra {
    width: 44px;
    height: 26px;
}
.tray {
    display: flex;
    align-items: center;
    justify-content: flex-end;
    padding-right: 20px;
    text-align: right;
}
.tray .icon {
    margin-left: 8px;
}
.tray .overflow {
    margin-right: 8px;
}
.lang {
    margin: 0px 10px 0px 21px;
}
.clock {
    margin-left: 20px;
}
```
